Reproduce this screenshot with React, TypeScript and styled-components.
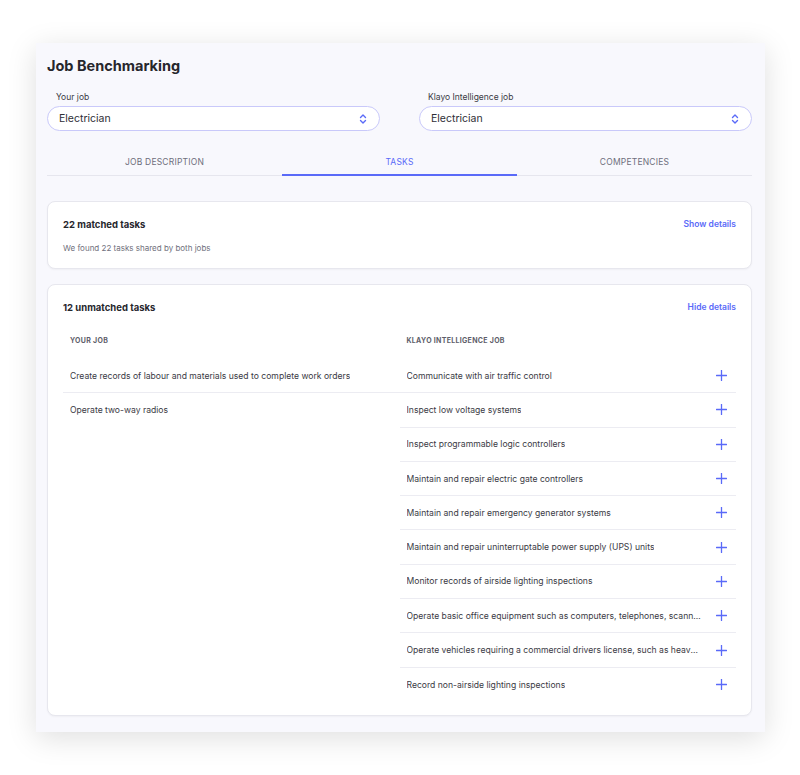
import React from "react";
import styled, { createGlobalStyle } from "styled-components";

const Global = createGlobalStyle`
  html, body { margin: 0; padding: 0; background: #ffffff; }
  body { font-family: Inter, "Noto Sans", sans-serif; color: #26262e; -webkit-font-smoothing: antialiased; }
  * { box-sizing: border-box; }
`;

const Page = styled.div`
  padding: 43px 35px 43px 36px;
`;

const Panel = styled.section`
  width: 729px;
  background: #f8f8fd;
  box-shadow: 0 6px 28px rgba(0, 0, 0, 0.13);
  padding: 14px 13px 16px 11px;
`;

const Title = styled.h1`
  margin: 0;
  font-size: 14.5px;
  font-weight: 700;
  line-height: 18px;
  color: #26262c;
`;

const SelectRow = styled.div`
  display: grid;
  grid-template-columns: 1fr 1fr;
  gap: 39px;
  margin-top: 17px;
`;

const Field = styled.div`
  display: flex;
  flex-direction: column;
`;

const Label = styled.label`
  font-size: 8.5px;
  color: #3a3a44;
  padding-left: 9px;
  line-height: 11px;
  margin-bottom: 3px;
`;

const SelectBox = styled.div`
  height: 25px;
  border: 1px solid #c9c9fa;
  border-radius: 13px;
  background: #ffffff;
  display: flex;
  align-items: center;
  justify-content: space-between;
  padding: 0 12px 0 11px;
  font-size: 10.5px;
  color: #2e2e36;
`;

const Tabs = styled.div`
  display: grid;
  grid-template-columns: repeat(3, 1fr);
  margin-top: 18px;
  border-bottom: 1px solid #e6e6ee;
`;

const Tab = styled.div<{ $active?: boolean }>`
  text-align: center;
  font-size: 8.5px;
  letter-spacing: 0.2px;
  text-transform: uppercase;
  color: ${(p) => (p.$active ? "#5a6af8" : "#6e6e7c")};
  padding: 8px 0 6px;
  line-height: 11px;
  margin-bottom: -1px;
  border-bottom: 2px solid ${(p) => (p.$active ? "#5a6af8" : "transparent")};
`;

const Card = styled.div<{ $gap?: number }>`
  background: #ffffff;
  border: 1px solid #e7e7ee;
  border-radius: 8px;
  box-shadow: 0 1px 2px rgba(0, 0, 0, 0.04);
  padding: 14px 15px 0 15px;
  margin-top: ${(p) => p.$gap ?? 16}px;
`;

const CardHead = styled.div`
  display: flex;
  justify-content: space-between;
  align-items: center;
  height: 16px;
`;

const CardTitle = styled.div`
  font-size: 9.5px;
  font-weight: 700;
  color: #26262c;
`;

const LinkBtn = styled.button`
  border: 0;
  background: none;
  padding: 0;
  font-family: inherit;
  font-size: 8.5px;
  font-weight: 600;
  color: #5a6af8;
  cursor: pointer;
`;

const CardText = styled.div`
  font-size: 8px;
  color: #70707c;
  margin-top: 11px;
  padding-bottom: 14px;
  line-height: 11px;
`;

const Columns = styled.div`
  display: grid;
  grid-template-columns: 1fr 1fr;
  margin-top: 17px;
  padding-bottom: 13px;
`;

const Column = styled.div`
  display: flex;
  flex-direction: column;
`;

const ColHead = styled.div`
  font-size: 7px;
  font-weight: 700;
  letter-spacing: 0.3px;
  color: #5e5e6a;
  text-transform: uppercase;
  padding: 0 7px;
  height: 17px;
  margin-bottom: 10px;
  display: flex;
  align-items: center;
`;

const Row = styled.div`
  height: 34.3px;
  display: flex;
  align-items: center;
  justify-content: space-between;
  padding: 0 9px 0 7px;
  font-size: 8.6px;
  color: #3a3a44;
  border-bottom: 1px solid #ececf2;
  &:last-child { border-bottom: 0; }
`;

const RowText = styled.span`
  white-space: nowrap;
  overflow: hidden;
  text-overflow: ellipsis;
  max-width: 296px;
`;

const ChevronUpDown = () => (
  <svg width="8" height="10" viewBox="0 0 8 10" fill="none" stroke="#5a6af8" strokeWidth="1.4" strokeLinecap="round" strokeLinejoin="round">
    <path d="M1.5 3.5 L4 1 L6.5 3.5" />
    <path d="M1.5 6.5 L4 9 L6.5 6.5" />
  </svg>
);

const Plus = () => (
  <svg width="11" height="11" viewBox="0 0 11 11" fill="none" stroke="#5a6af8" strokeWidth="1.3" strokeLinecap="round">
    <path d="M5.5 0.5 V10.5" />
    <path d="M0.5 5.5 H10.5" />
  </svg>
);

const yourTasks = [
  "Create records of labour and materials used to complete work orders",
  "Operate two-way radios",
];

const klayoTasks = [
  "Communicate with air traffic control",
  "Inspect low voltage systems",
  "Inspect programmable logic controllers",
  "Maintain and repair electric gate controllers",
  "Maintain and repair emergency generator systems",
  "Maintain and repair uninterruptable power supply (UPS) units",
  "Monitor records of airside lighting inspections",
  "Operate basic office equipment such as computers, telephones, scanners and printers",
  "Operate vehicles requiring a commercial drivers license, such as heavy trucks",
  "Record non-airside lighting inspections",
];

export default function App() {
  return (
    <Page>
      <Global />
      <Panel>
        <Title>Job Benchmarking</Title>
        <SelectRow>
          <Field>
            <Label>Your job</Label>
            <SelectBox>
              <span>Electrician</span>
              <ChevronUpDown />
            </SelectBox>
          </Field>
          <Field>
            <Label>Klayo Intelligence job</Label>
            <SelectBox>
              <span>Electrician</span>
              <ChevronUpDown />
            </SelectBox>
          </Field>
        </SelectRow>
        <Tabs>
          <Tab>Job description</Tab>
          <Tab $active>Tasks</Tab>
          <Tab>Competencies</Tab>
        </Tabs>
        <Card $gap={25}>
          <CardHead>
            <CardTitle>22 matched tasks</CardTitle>
            <LinkBtn>Show details</LinkBtn>
          </CardHead>
          <CardText>We found 22 tasks shared by both jobs</CardText>
        </Card>
        <Card $gap={15}>
          <CardHead>
            <CardTitle>12 unmatched tasks</CardTitle>
            <LinkBtn>Hide details</LinkBtn>
          </CardHead>
          <Columns>
            <Column>
              <ColHead>Your job</ColHead>
              {yourTasks.map((t) => (
                <Row key={t}>
                  <RowText>{t}</RowText>
                </Row>
              ))}
            </Column>
            <Column>
              <ColHead>Klayo Intelligence job</ColHead>
              {klayoTasks.map((t) => (
                <Row key={t}>
                  <RowText>{t}</RowText>
                  <Plus />
                </Row>
              ))}
            </Column>
          </Columns>
        </Card>
      </Panel>
    </Page>
  );
}
